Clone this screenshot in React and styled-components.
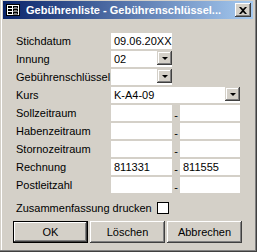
import React from 'react';
import styled, { createGlobalStyle } from 'styled-components';

const GlobalStyle = createGlobalStyle`
  html, body {
    margin: 0;
    padding: 0;
    background: #d4d0c8;
  }
  * {
    box-sizing: border-box;
  }
`

const Window = styled.div`
  width: 257px;
  height: 252px;
  display: flex;
  flex-direction: column;
  padding: 1px 4px 4px 3px;
  background: #d4d0c8;
  box-shadow: inset -1px -1px #404040, inset -2px -2px #808080, inset 1px 0 #d4d0c8, inset 2px 0 #ffffff;
  font-family: "Liberation Sans", Arial, sans-serif;
  font-size: 11px;
  color: #000;
  overflow: hidden;
`

const TitleBar = styled.div`
  height: 18px;
  display: flex;
  align-items: center;
  padding: 0 2px 0 2px;
  background: linear-gradient(to right, #0a246a, #a6caf0);
  color: #fff;
  font-weight: bold;
  font-size: 11px;
`

const TitleText = styled.span`
  flex: 1;
  margin-left: 5px;
  white-space: nowrap;
  overflow: hidden;
`

const CloseButton = styled.div`
  width: 16px;
  height: 14px;
  display: flex;
  align-items: center;
  justify-content: center;
  background: #d4d0c8;
  box-shadow: inset -1px -1px #404040, inset 1px 1px #ffffff, inset -2px -2px #808080;
`

const Client = styled.div`
  flex: 1;
  padding: 14px 10px 0 10px;
  display: flex;
  flex-direction: column;
`

const Form = styled.div`
  display: grid;
  grid-template-columns: 95px 61px 8px 60px;
  grid-auto-rows: 16px;
  row-gap: 2px;
  padding-left: 3px;
`

const Label = styled.div`
  display: flex;
  align-items: center;
  white-space: nowrap;
`

const Field = styled.div`
  grid-column: ${p => p.$wide ? '2 / 5' : 'auto'};
  position: relative;
  display: flex;
  align-items: center;
  padding-left: 3px;
  background: #fff;
  white-space: nowrap;
`

const Dash = styled.div`
  display: flex;
  align-items: center;
  justify-content: center;
  padding-top: 3px;
`

const DropButton = styled.div`
  position: absolute;
  top: 0;
  right: 0;
  width: 15px;
  height: 14px;
  display: flex;
  align-items: center;
  justify-content: center;
  background: #d4d0c8;
  box-shadow: inset -1px -1px #404040, inset 1px 1px #d4d0c8, inset -2px -2px #808080, inset 2px 2px #ffffff;
`

const Arrow = styled.div`
  width: 0;
  height: 0;
  border-left: 3px solid transparent;
  border-right: 3px solid transparent;
  border-top: 3px solid #000;
  margin-top: 1px;
`

const CheckRow = styled.div`
  display: flex;
  align-items: center;
  gap: 5px;
  height: 12px;
  margin-top: 9px;
  padding-left: 3px;
`

const CheckBox = styled.div`
  width: 12px;
  height: 12px;
  background: #fff;
  border: 1px solid #000;
`

const ButtonRow = styled.div`
  display: flex;
  gap: 2px;
  margin-top: 7px;
`

const Button = styled.div`
  width: 75px;
  height: 22px;
  display: flex;
  align-items: center;
  justify-content: center;
  background: #d4d0c8;
  box-shadow: ${p => p.$default
    ? 'inset 0 0 0 1px #000, inset -2px -2px #404040, inset 2px 2px #ffffff, inset -3px -3px #808080'
    : 'inset -1px -1px #404040, inset 1px 1px #ffffff, inset -2px -2px #808080'};
`

function FormIcon() {
  return (
    <svg width="16" height="16" viewBox="0 0 16 16">
      <rect x="1.5" y="2.5" width="13" height="11" fill="#fff" stroke="#000" />
      <rect x="3" y="4" width="4" height="2" fill="#000" />
      <rect x="3" y="7" width="4" height="2" fill="#000" />
      <rect x="3" y="10" width="4" height="2" fill="#000" />
      <rect x="8.5" y="4.5" width="4" height="1.5" fill="none" stroke="#000" />
      <rect x="8.5" y="7.5" width="4" height="1.5" fill="none" stroke="#000" />
      <rect x="8.5" y="10.5" width="4" height="1.5" fill="none" stroke="#000" />
    </svg>
  )
}

function CloseIcon() {
  return (
    <svg width="8" height="7" viewBox="0 0 8 7">
      <path d="M0 0h2l2 2 2-2h2L5 3.5 8 7H6L4 5 2 7H0l3-3.5z" fill="#000" />
    </svg>
  )
}

function Combo({ value, wide }) {
  return (
    <Field $wide={wide}>
      {value}
      <DropButton><Arrow /></DropButton>
    </Field>
  )
}

function Range({ label, from, to }) {
  return (
    <>
      <Label>{label}</Label>
      <Field>{from}</Field>
      <Dash>-</Dash>
      <Field>{to}</Field>
    </>
  )
}

export default function App() {
  return (
    <>
      <GlobalStyle />
      <Window>
        <TitleBar>
          <FormIcon />
          <TitleText>Gebührenliste - Gebührenschlüssel...</TitleText>
          <CloseButton><CloseIcon /></CloseButton>
        </TitleBar>
        <Client>
          <Form>
            <Label>Stichdatum</Label>
            <Field>09.06.20XX</Field>
            <span />
            <span />
            <Label>Innung</Label>
            <Combo value="02" />
            <span />
            <span />
            <Label>Gebührenschlüssel</Label>
            <Combo value="" />
            <span />
            <span />
            <Label>Kurs</Label>
            <Combo value="K-A4-09" wide />
            <Range label="Sollzeitraum" />
            <Range label="Habenzeitraum" />
            <Range label="Stornozeitraum" />
            <Range label="Rechnung" from="811331" to="811555" />
            <Range label="Postleitzahl" />
          </Form>
          <CheckRow>
            <span>Zusammenfassung drucken</span>
            <CheckBox />
          </CheckRow>
          <ButtonRow>
            <Button $default>OK</Button>
            <Button>Löschen</Button>
            <Button>Abbrechen</Button>
          </ButtonRow>
        </Client>
      </Window>
    </>
  )
}
